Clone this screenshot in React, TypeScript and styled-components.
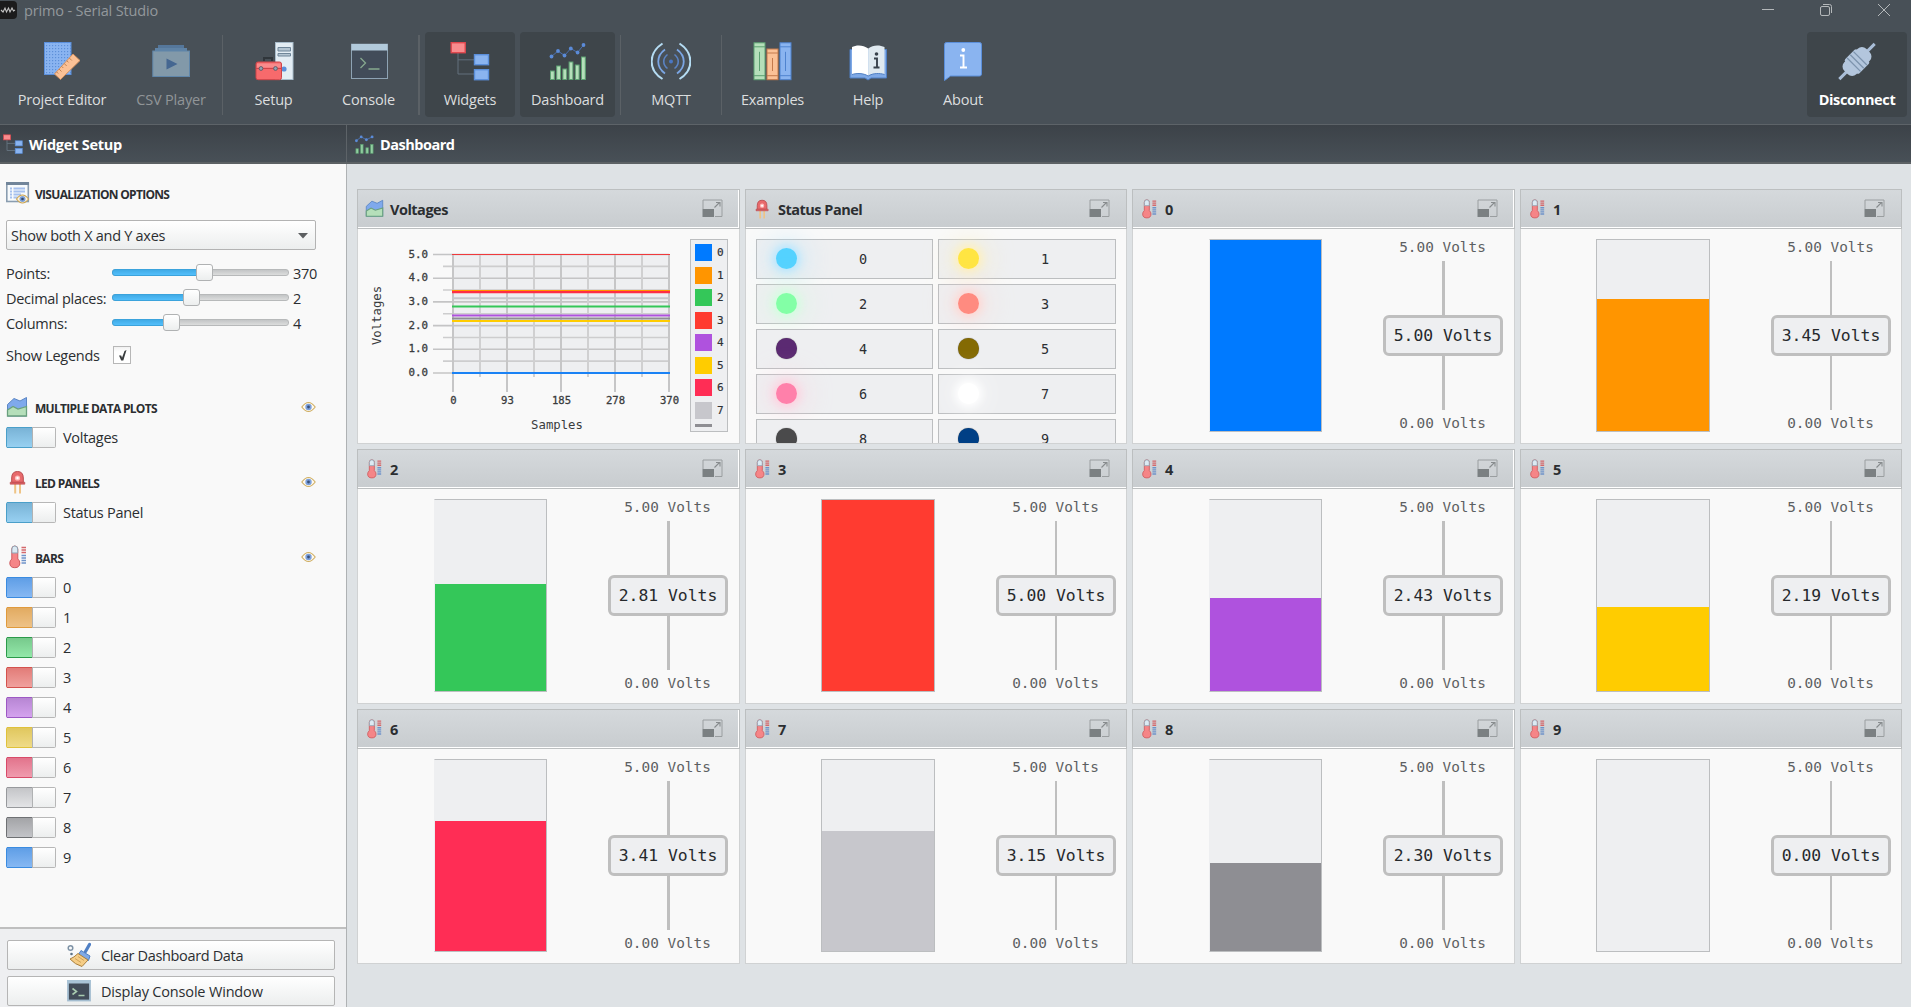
import React from "react";
import styled, { createGlobalStyle } from "styled-components";

const sans = `"Open Sans", "Noto Sans", sans-serif`;
const mono = `"DejaVu Sans Mono", "Liberation Mono", monospace`;

const GlobalStyle = createGlobalStyle`
  * { box-sizing: border-box; }
  html, body { margin: 0; padding: 0; }
  body { font-family: ${sans}; color: #2b2e31; background: #dee2e5; overflow: hidden; }
  svg { display: block; flex: none; }
`;

/* ---------- window frame ---------- */

const Window = styled.div`
  width: 100vw;
  height: 1007px;
  display: flex;
  flex-direction: column;
  overflow: hidden;
`;

const TitleBar = styled.div`
  height: 24px;
  flex: none;
  display: flex;
  align-items: flex-start;
  background: #485057;
`;

const TitleText = styled.div`
  margin-left: 6px;
  font-size: 14.5px;
  line-height: 22px;
  letter-spacing: -0.15px;
  color: #93989c;
  flex: 1;
`;

const WindowControls = styled.div`
  display: flex;
  gap: 46px;
  padding: 4px 21px 0 0;
`;

const Toolbar = styled.div`
  height: 101px;
  flex: none;
  display: flex;
  align-items: flex-start;
  gap: 5px;
  padding: 8px 4px 0 5px;
  background: #485057;
  border-bottom: 1px solid #5d6368;
`;

const ToolButton = styled.div<{ $w: number; $checked?: boolean; $off?: boolean; $bold?: boolean }>`
  width: ${(p) => p.$w}px;
  height: 85px;
  flex: none;
  display: flex;
  flex-direction: column;
  align-items: center;
  padding-top: 9px;
  gap: 9px;
  border-radius: 4px;
  background: ${(p) => (p.$checked ? "#3e454a" : "transparent")};
  color: ${(p) => (p.$off ? "#919597" : p.$bold ? "#ffffff" : "#dcdedf")};
  font-size: 14.5px;
  font-weight: ${(p) => (p.$bold ? 700 : 400)};
  letter-spacing: ${(p) => (p.$bold ? -0.35 : -0.2)}px;
  line-height: 20px;
  white-space: nowrap;
`;

const ToolSeparator = styled.div<{ $w?: number; $pull?: boolean }>`
  width: ${(p) => p.$w ?? 1}px;
  height: 80px;
  flex: none;
  margin: 3px 0 0 ${(p) => (p.$pull ? -1 : 0)}px;
  background: #5b6166;
`;

const Spacer = styled.div`
  flex: 1;
`;

const Main = styled.div`
  flex: 1;
  display: flex;
  min-height: 0;
`;

const SideColumn = styled.div`
  width: 347px;
  flex: none;
  display: flex;
  flex-direction: column;
  border-right: 1px solid #afb2b4;
`;

const ContentColumn = styled.div`
  flex: 1;
  display: flex;
  flex-direction: column;
  min-width: 0;
`;

const PaneHeader = styled.div<{ $pad: number; $edge?: boolean }>`
  height: 39px;
  flex: none;
  display: flex;
  align-items: center;
  gap: 6px;
  padding: 1px 0 0 ${(p) => p.$pad}px;
  margin-right: ${(p) => (p.$edge ? -1 : 0)}px;
  border-bottom: 2px solid #5c6164;
  border-right: ${(p) => (p.$edge ? "1px solid #5d6368" : "none")};
  background: linear-gradient(#3c4248, #485057);
  color: #fff;
  font-size: 14.5px;
  font-weight: 700;
  letter-spacing: ${(p) => (p.$edge ? -0.25 : -0.5)}px;
`;

/* ---------- sidebar ---------- */

const SideBody = styled.div`
  flex: 1;
  background: #f9f9f9;
  padding: 14px 0 0 6px;
  display: flex;
  flex-direction: column;
  font-size: 14.5px;
  letter-spacing: -0.28px;
`;

const SectionHead = styled.div<{ $top?: number }>`
  width: 310px;
  height: 30px;
  flex: none;
  margin-top: ${(p) => p.$top ?? 0}px;
  display: flex;
  align-items: center;
`;

const SectionIcon = styled.div<{ $pad?: number }>`
  width: 29px;
  padding-left: ${(p) => p.$pad ?? 0}px;
`;

const SectionTitle = styled.div`
  flex: 1;
  font-size: 12px;
  font-weight: 700;
  letter-spacing: -0.7px;
  padding-top: 2px;
`;

const Combo = styled.div`
  width: 310px;
  height: 30px;
  margin-top: 12px;
  display: flex;
  align-items: center;
  justify-content: space-between;
  padding: 1px 7px 0 4px;
  border: 1px solid #b3b3b3;
  border-radius: 2px;
  background: linear-gradient(#ffffff, #eceeee);
`;

const Sliders = styled.div`
  margin-top: 10px;
  display: flex;
  flex-direction: column;
`;

const SliderRow = styled.div`
  height: 25px;
  display: flex;
  align-items: center;
`;

const SliderLabel = styled.div`
  width: 106px;
  padding-top: 1px;
  white-space: nowrap;
`;

const Groove = styled.div`
  width: 177px;
  height: 7px;
  display: flex;
  align-items: center;
  border: 1px solid #b7b9ba;
  border-radius: 3px;
  background: linear-gradient(#c3c5c6, #dcdddd);
`;

const GrooveFill = styled.div`
  height: 7px;
  margin-left: -1px;
  flex: none;
  border: 1px solid #3ba3dc;
  border-radius: 3px 0 0 3px;
  background: linear-gradient(#41abe6, #53bffb);
`;

const Handle = styled.div`
  width: 17px;
  height: 17px;
  flex: none;
  margin-left: -1px;
  border: 1px solid #b0b2b3;
  border-radius: 3px;
  background: linear-gradient(#ffffff, #eceeee);
`;

const SliderValue = styled.div`
  margin-left: 4px;
  padding-top: 1px;
`;

const CheckRow = styled.div`
  height: 40px;
  display: flex;
  align-items: center;
`;

const CheckLabel = styled.div`
  width: 107px;
`;

const CheckBox = styled.div`
  width: 18px;
  height: 18px;
  border: 1px solid #b7b7b7;
  background: linear-gradient(#f1f1f1, #ffffff 30%);
`;

const ToggleRow = styled.div`
  height: 30px;
  flex: none;
  display: flex;
  align-items: center;
  gap: 7px;
`;

const Toggle = styled.div<{ $edge: string }>`
  width: 50px;
  height: 21px;
  display: flex;
  border: 1px solid #b7b7b7;
  border-left-color: ${(p) => p.$edge};
  border-radius: 2px;
`;

const ToggleOn = styled.div<{ $a: string; $b: string; $edge: string }>`
  width: 25px;
  margin: -1px 0;
  border-top: 1px solid ${(p) => p.$edge};
  border-bottom: 1px solid ${(p) => p.$edge};
  background: linear-gradient(${(p) => p.$a}, ${(p) => p.$b});
`;

const ToggleKnob = styled.div`
  flex: 1;
  border-left: 1px solid #b0b2b3;
  background: linear-gradient(#ffffff, #eceeee);
`;

const SideFooter = styled.div`
  height: 80px;
  flex: none;
  padding: 11px 0 0 7px;
  display: flex;
  flex-direction: column;
  gap: 6px;
  border-top: 2px solid #bfbfbf;
  background: #eeeff1;
`;

const PushButton = styled.div<{ $track: number }>`
  width: 328px;
  height: 30px;
  flex: none;
  display: flex;
  align-items: center;
  padding-left: 59px;
  gap: 10px;
  border: 1px solid #b5b5b5;
  border-radius: 2px;
  background: linear-gradient(#ffffff, #eceeee);
  font-size: 14.5px;
  letter-spacing: ${(p) => p.$track}px;
`;

/* ---------- dashboard ---------- */

const Board = styled.div`
  flex: 1;
  display: grid;
  grid-template-columns: 383px 382px 383px 382px;
  grid-auto-rows: 255px;
  gap: 5px;
  align-content: start;
  padding: 25px 0 0 10px;
  background: #dee2e5;
`;

const Card = styled.div`
  display: flex;
  flex-direction: column;
  min-width: 0;
`;

const CardHeader = styled.div<{ $edge?: boolean; $pad?: number }>`
  height: 40px;
  flex: none;
  display: flex;
  align-items: center;
  padding: 0 16px 1px ${(p) => p.$pad ?? 7}px;
  border: 1px solid #bcbfc0;
  box-shadow: inset ${(p) => (p.$edge ? -1 : 0)}px -1px 0 #fff;
  background: linear-gradient(#d5d9dc, #c8cccf);
  font-size: 14.5px;
  font-weight: 700;
  letter-spacing: -0.5px;
`;

const CardIcon = styled.div<{ $w: number }>`
  width: ${(p) => p.$w}px;
`;

const CardTitle = styled.div`
  flex: 1;
  padding-top: 2px;
`;

const CardBody = styled.div`
  flex: 1;
  display: flex;
  min-height: 0;
  overflow: hidden;
  border: 1px solid #d0d2d3;
  border-top: none;
  background: #f9f9f9;
`;

const BarFrame = styled.div<{ $edge?: boolean }>`
  width: ${(p) => (p.$edge ? 113 : 114)}px;
  height: 193px;
  margin: 10px 0 0 ${(p) => (p.$edge ? 76 : 75)}px;
  flex: none;
  display: flex;
  align-items: flex-end;
  border: 1px solid #bcbec0;
  border-left-color: ${(p) => (p.$edge ? "#eeeff1" : "#bcbec0")};
  background: #eeeff1;
`;

const BarFill = styled.div`
  width: 100%;
`;

const Gauge = styled.div<{ $edge?: boolean }>`
  flex: 1;
  display: flex;
  flex-direction: column;
  align-items: flex-end;
  padding: 8px ${(p) => (p.$edge ? 11 : 10)}px 0 0;
`;

const GaugeInner = styled.div`
  width: 120px;
  display: flex;
  flex-direction: column;
  align-items: center;
`;

const Limit = styled.div<{ $low?: boolean }>`
  padding-top: ${(p) => (p.$low ? 3 : 0)}px;
  padding-bottom: ${(p) => (p.$low ? 0 : 3)}px;
  margin-left: -1px;
  font: 14.4px/21px ${mono};
  color: #5d6062;
  white-space: nowrap;
`;

const Stem = styled.div<{ $w: number }>`
  width: ${(p) => p.$w}px;
  height: 54px;
  background: #bfbfbf;
`;

const Reading = styled.div`
  width: 120px;
  height: 41px;
  display: flex;
  align-items: center;
  justify-content: center;
  border: 3px solid #bfbfbf;
  border-radius: 6px;
  background: #eeeff1;
  font: 16.4px/20px ${mono};
  color: #26292c;
  white-space: nowrap;
`;

const Legend = styled.div`
  width: 38px;
  height: 193px;
  margin-top: 10px;
  padding: 4px 0 0 4px;
  border: 1px solid #bcbec0;
  background: #eeeff1;
  overflow: hidden;
`;

const LegendRow = styled.div`
  height: 22.5px;
  display: flex;
  align-items: flex-start;
  gap: 5px;
  font: 11px/17px ${mono};
  -webkit-text-stroke: 0.2px #3a3c3e;
`;

const Swatch = styled.div<{ $c: string; $h?: number }>`
  width: 17px;
  height: ${(p) => p.$h ?? 17}px;
  background: ${(p) => p.$c};
`;

const LedGrid = styled.div`
  flex: 1;
  display: grid;
  grid-template-columns: 177px 178px;
  grid-auto-rows: 40px;
  gap: 5px;
  padding: 10px 0 0 10px;
`;

const LedCell = styled.div`
  display: flex;
  align-items: center;
  padding: 0 0 1px 19px;
  border: 1px solid #bcbec0;
  background: #eeeff1;
`;

const Led = styled.div<{ $c: string; $glow?: string }>`
  width: 21px;
  height: 21px;
  border-radius: 50%;
  background: ${(p) => p.$c};
  box-shadow: ${(p) =>
    p.$glow ? `0 0 9px 3px ${p.$glow}, 0 0 26px 10px ${p.$glow}66` : "0 0 1px 0 #555"};
`;

const LedLabel = styled.div`
  margin-left: 62px;
  font: 13.5px/20px ${mono};
`;

/* ---------- icons ---------- */

const LogoIcon = () => (
  <svg width="18" height="20" viewBox="0 0 18 20">
    <rect x="-3" y="1" width="20" height="18" rx="4" fill="#1b1b1c" />
    <path d="M1 10l2 2 2-4 1.500 4L8.500 8l1.500 4 2-4 1.500 3 1.500-1" stroke="#c4c4c4" strokeWidth="1.100" fill="none" />
  </svg>
);

const BlueprintIcon = () => (
  <svg width="40" height="40" viewBox="0 0 40 40">
    <defs>
      <pattern id="dots" width="3" height="3" patternUnits="userSpaceOnUse">
        <rect width="1.200" height="1.200" x="1" y="1" fill="#5d8fd8" />
      </pattern>
    </defs>
    <rect x="2.500" y="1.500" width="26.500" height="32" fill="#8ab4f0" />
    <rect x="2.500" y="1.500" width="26.500" height="32" fill="url(#dots)" stroke="#5b8fdb" />
    <path d="M12.500 33L31 13l7 6.500L18.500 38.500z" fill="#fbc196" stroke="#d8935f" />
    <path d="M14.500 30.800l1.700 1.700M17 28l2.500 2.500M19.600 25.300l1.700 1.700M22.200 22.500l2.500 2.500M24.800 19.700l1.700 1.700M27.300 17l2.500 2.500" stroke="#b97c4c" strokeWidth=".9" />
  </svg>
);

const PlayerIcon = () => (
  <svg width="40" height="40" viewBox="0 0 40 40">
    <path d="M7 4h26v3H7z" fill="#55779b" />
    <path d="M4 7h32v3H4z" fill="#5f83a6" />
    <rect x="1.800" y="10" width="36.700" height="25.500" fill="#8299a9" stroke="#5f86aa" />
    <path d="M15.500 17.500l11 5.500-11 5.500z" fill="#456791" />
  </svg>
);

const SetupIcon = () => (
  <svg width="40" height="40" viewBox="0 0 40 40">
    <rect x="21.500" y="1.500" width="17.500" height="37" fill="#e3edf4" stroke="#a8bccb" />
    <path d="M24 6.500h12.500v3.500H24zM24 12.500h12.500v2.500H24z" fill="#b4c5d2" stroke="#6e8598" />
    <circle cx="30" cy="28" r="2.600" fill="#5b8fdb" />
    <path d="M10 20v-3h8v3" fill="none" stroke="#30363b" strokeWidth="2" />
    <rect x="2" y="21" width="25.500" height="17.700" rx="2" fill="#f76a6c" stroke="#cf4449" />
    <path d="M3 22.500h23.500v4H3z" fill="#f98b8c" />
    <path d="M2 27.500h25.500" stroke="#cf4449" />
    <circle cx="7" cy="27.500" r="1.900" fill="#8fa6b6" stroke="#6d5a66" />
    <circle cx="21.500" cy="27.500" r="1.900" fill="#8fa6b6" stroke="#6d5a66" />
  </svg>
);

const ConsoleIcon = () => (
  <svg width="40" height="40" viewBox="0 0 40 40">
    <rect x="2.500" y="3.200" width="36" height="34.300" fill="#424c59" stroke="#8ea3b4" />
    <path d="M2.500 3h36v6.500h-36z" fill="#b2cadb" />
    <path d="M11.500 17l5 5-5 5M19.500 28h11" stroke="#86a98f" strokeWidth="1.300" fill="none" />
  </svg>
);

const TreeIcon = ({ w = 40 }: { w?: number }) => (
  <svg width={w} height={w} viewBox="0 0 40 40">
    <path d="M8 12v21h16M8 18.800h16" stroke="#62707c" strokeWidth={w < 30 ? 2 : 1} fill="none" />
    <rect x="1.200" y="1.700" width="14" height="10" fill="#f98c8e" stroke="#e0484e" strokeWidth="1.400" />
    <rect x="24.500" y="13.700" width="14" height="10" fill="#8ab4f0" stroke="#5b8fdb" strokeWidth="1.400" />
    <rect x="24.500" y="28.700" width="14" height="10" fill="#8ab4f0" stroke="#5b8fdb" strokeWidth="1.400" />
  </svg>
);

const ChartIcon = ({ w = 40 }: { w?: number }) => {
  const small = w < 30;
  const bars: [number, number][] = small
    ? [[2, 29], [12, 20], [23, 27], [33, 20]]
    : [[2.5, 30], [8.7, 25], [14.9, 28], [21.1, 21], [27.3, 24], [33.5, 16]];
  const pts = small ? "3,12 13,4 24,10 36,4" : "3.5,15.5 10,10 16.5,14.5 22.8,7.5 29.6,11.5 35.5,4";
  return (
    <svg width={w} height={w} viewBox="0 0 40 40">
      {bars.map(([x, y]) => (
        <rect key={x} x={x} y={y} width={small ? 5 : 3.8} height={38.5 - y} fill={small ? "#94cfa2" : "#b5dfba"} stroke="#5da172" strokeWidth={small ? 1.5 : 1} />
      ))}
      <polyline points={pts} fill="none" stroke="#4a6fae" strokeWidth={small ? 2 : 1} />
      {pts.split(" ").map((p) => (
        <circle key={p} cx={p.split(",")[0]} cy={p.split(",")[1]} r={small ? 3 : 1.9} fill="#5b8bd8" />
      ))}
    </svg>
  );
};

const SignalIcon = () => (
  <svg width="40" height="40" viewBox="0 0 40 40" fill="none">
    <path d="M11.500 2.500C-3 12-3 29 11.500 38M28.500 2.500C43 12 43 29 28.500 38" stroke="#b5dcf3" strokeWidth="2" />
    <path d="M14 8.500c-9 6.500-9 17.500 0 24M26 8.500c9 6.500 9 17.500 0 24" stroke="#7ba6e4" strokeWidth="1.800" />
    <path d="M16.500 13.500c-5 4-5 10 0 14M23.500 13.500c5 4 5 10 0 14" stroke="#5b83c2" strokeWidth="1.600" />
    <circle cx="20" cy="20.500" r="2" fill="#4a77c4" />
  </svg>
);

const BooksIcon = () => (
  <svg width="40" height="40" viewBox="0 0 40 40">
    {([[1, 1.8, "#b5dfba", "#5da172"], [14, 8, "#fbc196", "#c47a4c"], [27, 1.8, "#8ab4f0", "#4f83cf"]] as [number, number, string, string][]).map(
      ([x, y, f, s]) => (
        <g key={x} stroke={s} fill={f}>
          <rect x={x} y={y} width="11" height={38.7 - y} />
          <path d={`M${x} ${y + 4}h11M${x} 34.700h11M${x + 5.5} ${y + 9}V30`} />
        </g>
      )
    )}
  </svg>
);

const HelpIcon = () => (
  <svg width="40" height="40" viewBox="0 0 40 40">
    <path d="M2 8.500h36.500V37H23l-3 2-3-2H2z" fill="#7fa9e6" stroke="#4f7fc4" />
    <path d="M20.200 7.500C15 3.500 8 4 4 6v27.500c5-1.500 11-1.500 16.200 1.500z" fill="#fff" />
    <path d="M20.200 7.500C25 3.500 32 4 36.500 6v27.500c-5-1.500-11-1.500-16.300 1.500z" fill="#dfe9f0" />
    <path d="M4 33.500c5-1.500 11-1.500 16.200 1.500 5-3 11-3 16.300-1.500" fill="none" stroke="#4f7fc4" />
    <path d="M26 17.500h3v8.500M25.500 26.500h6" stroke="#39424c" strokeWidth="1.900" fill="none" />
    <circle cx="28.500" cy="13" r="1.800" fill="#39424c" />
  </svg>
);

const AboutIcon = () => (
  <svg width="40" height="40" viewBox="0 0 40 40">
    <path d="M3.500 1.500h33q2 0 2 2V33q0 2-2 2H7.500L1.500 39.500V3.500q0-2 2-2z" fill="#8ab4f0" stroke="#5b8fdb" />
    <path d="M17 14.500h3.500V26M17 26.500h7" stroke="#fff" strokeWidth="1.900" fill="none" />
    <circle cx="20.300" cy="9" r="1.900" fill="#fff" />
  </svg>
);

const PlugIcon = () => (
  <svg width="40" height="40" viewBox="0 0 40 40">
    <g transform="translate(20 20.500) rotate(-45)">
      <path d="M-25-1.500h50v3h-50z" fill="#a9bed8" />
      <rect x="-15.500" y="-8.500" width="31" height="17" rx="6" fill="#b3c6dd" />
      <rect x="-8.500" y="-10" width="17" height="20" rx="2" fill="#b3c6dd" />
      <path d="M-4.500-9.500v19M0-9.500v19M4.500-9.500v19" stroke="#7d94ae" strokeWidth="1.300" />
    </g>
  </svg>
);

const OptionsIcon = () => (
  <svg width="24" height="24" viewBox="0 0 24 24">
    <rect x=".8" y="2" width="21.500" height="18.500" fill="#f7fafc" stroke="#8a9db0" strokeWidth="1.600" />
    <path d="M0 1h23v3H0z" fill="#71859a" />
    <path d="M4 7.500h2M7.500 7.500H19M4 10.500h2M7.500 10.500H19M4 13.500h2M7.500 13.500H15M4 16.500h2M7.500 16.500H12" stroke="#a5c0ee" strokeWidth="1.800" />
    <path d="M10.500 18q6-8 12 0-6 8-12 0z" fill="#fff6e0" stroke="#caa24e" strokeWidth="1.200" />
    <circle cx="16.500" cy="18" r="3" fill="#7c9fd6" />
    <circle cx="16.500" cy="18" r="1.300" fill="#33476d" />
  </svg>
);

const AreaIcon = ({ w = 22 }: { w?: number }) => (
  <svg width={w} height={w} viewBox="0 0 22 22">
    <path d="M1.500 8.500L8 2.500l6 2.500 6.500-3.500V20h-19z" fill="#7fa9ec" stroke="#5b86c4" />
    <path d="M1.500 14L7 10.500l5 2.500 8.500-2.500v9.500h-19z" fill="#b5dfba" stroke="#6aa07e" strokeWidth="1.300" />
  </svg>
);

const LedIcon = ({ w = 24 }: { w?: number }) => (
  <svg width={w * 0.7} height={w} viewBox="0 0 16.800 24">
    <path d="M6.200 14v9.500M11 14v9.500" stroke="#efc486" strokeWidth="2" />
    <path d="M2.700 12.500V8q0-6.500 5.800-6.500t5.800 6.500v4.500z" fill="#e86a6c" stroke="#b94a4e" />
    <path d="M1.200 12.200h14.600v2H1.200z" fill="#d95f62" stroke="#b94a4e" strokeWidth=".6" />
    <circle cx="8.500" cy="8" r="2.600" fill="#fbb" />
    <circle cx="8.500" cy="8" r="1.200" fill="#fff" />
  </svg>
);

const ThermoIcon = ({ w = 24 }: { w?: number }) => (
  <svg width={w * 0.75} height={w} viewBox="0 0 18 24">
    <path d="M2.800 14V4q0-3 3-3t3 3v10q2 1.500 2 4 0 4.700-5 4.700T.8 18q0-2.500 2-4z" fill="#f58587" stroke="#cf5a5e" />
    <path d="M2.900 8V4q0-3 2.900-3t2.900 3v4z" fill="#dceaf3" stroke="#8fa3b3" />
    <path d="M12.500 2.500h4.500M12.500 5h4.500M12.500 7.500h4.500" stroke="#d4686c" strokeWidth="1.600" />
    <path d="M12.500 10.500h4.500M12.500 13h4.500M12.500 15.500h4.500M12.500 18h4.500" stroke="#6f93c9" strokeWidth="1.600" />
  </svg>
);

const EyeIcon = () => (
  <svg width="15" height="12" viewBox="0 0 15 12">
    <path d="M.8 6Q7.500-3 14.200 6 7.500 15 .8 6z" fill="#fffaf0" stroke="#cfae62" strokeWidth="1.100" />
    <circle cx="7.500" cy="6" r="3.200" fill="#7ba0dc" />
    <circle cx="7.500" cy="6" r="1.400" fill="#3a5078" />
  </svg>
);

const ExpandIcon = () => (
  <svg width="21" height="19" viewBox="0 0 21 19">
    <path d="M1 10V1h19v16.500h-7" fill="none" stroke="#9a9ea0" />
    <path d="M.5 10h11.500v8H.5z" fill="#7b8082" />
    <path d="M12.500 8.500l5-5M14 3.500h4V7.500" fill="none" stroke="#888c8e" strokeWidth="1.100" />
  </svg>
);

const BroomIcon = () => (
  <svg width="24" height="26" viewBox="0 0 24 26">
    <circle cx="3.500" cy="6" r="2.300" fill="none" stroke="#7f93a6" strokeWidth="1.500" />
    <circle cx="4.500" cy="12" r="1.300" fill="#5e7488" />
    <path d="M22.500 2.500L18.500 9.500" stroke="#4f7fc4" strokeWidth="3.200" strokeLinecap="round" />
    <path d="M14 8.500l9 5.500-1.500 4.500-10-6z" fill="#7fa9e6" stroke="#4f7fc4" />
    <path d="M11 11.500l10 6.500-6 6.500q-7-2-12-7.500 4-1.500 8-5.500z" fill="#f5cd86" stroke="#a9803f" />
    <path d="M8 16.500l6 4M11 14.500l6 4" stroke="#d3a45a" />
  </svg>
);

const SmallConsoleIcon = () => (
  <svg width="24" height="22" viewBox="0 0 24 22">
    <rect x="1" y="1" width="22" height="19.500" fill="#424c59" stroke="#a4bdd0" strokeWidth="1.800" />
    <path d="M0 0h24v3.500H0z" fill="#a9c3d6" />
    <path d="M5.500 8.500l4 3-4 3M11.500 15.500h6" stroke="#a8cbb0" strokeWidth="1.600" fill="none" />
  </svg>
);

/* ---------- data ---------- */

const channels = [
  { color: "#007aff", value: 5.0, toggle: ["#5f9ee6", "#86b8f3", "#3a8be0"] },
  { color: "#ff9500", value: 3.45, toggle: ["#e2ab61", "#eec287", "#e09a3c"] },
  { color: "#34c759", value: 2.81, toggle: ["#77c98c", "#93e8a9", "#2b9a4a"] },
  { color: "#ff3b30", value: 5.0, toggle: ["#e27c78", "#f0a19e", "#d4524d"] },
  { color: "#af52de", value: 2.43, toggle: ["#b786d3", "#d4a2ee", "#9d58c4"] },
  { color: "#ffcc00", value: 2.19, toggle: ["#e0c75e", "#efdb88", "#dfc13a"] },
  { color: "#ff2d55", value: 3.41, toggle: ["#e2748c", "#f09bae", "#d84a69"] },
  { color: "#c7c7cc", value: 3.15, toggle: ["#c4c5c8", "#e3e4e6", "#97999c"] },
  { color: "#8e8e93", value: 2.3, toggle: ["#a3a4a7", "#c3c4c8", "#6e7073"] },
  { color: "#007aff", value: 0.0, toggle: ["#5f9ee6", "#86b8f3", "#3a8be0"] },
];

const leds: { c: string; glow?: string }[] = [
  { c: "#54d2ff", glow: "#b4e6ff" },
  { c: "#ffe542", glow: "#fff0b8" },
  { c: "#83ffa6", glow: "#d0ffdd" },
  { c: "#ff8b80", glow: "#ffd6d2" },
  { c: "#5b2a72" },
  { c: "#846a03" },
  { c: "#ff80aa", glow: "#ffcfde" },
  { c: "#ffffff", glow: "#ffffff" },
  { c: "#4a4a4b" },
  { c: "#003f85" },
];

/* ---------- pieces ---------- */

const ToggleItem = ({ colors, label }: { colors: string[]; label: string }) => (
  <ToggleRow>
    <Toggle $edge={colors[2]}>
      <ToggleOn $a={colors[0]} $b={colors[1]} $edge={colors[2]} />
      <ToggleKnob />
    </Toggle>
    <span>{label}</span>
  </ToggleRow>
);

const SliderItem = ({ label, fill, value }: { label: string; fill: number; value: string }) => (
  <SliderRow>
    <SliderLabel>{label}</SliderLabel>
    <Groove>
      <GrooveFill style={{ width: fill }} />
      <Handle />
    </Groove>
    <SliderValue>{value}</SliderValue>
  </SliderRow>
);

const Plot = () => {
  const L = 95, R = 311, T = 25.5, B = 144;
  const y = (v: number) => B - ((B - T) * v) / 5;
  const series: [number, string, number][] = [
    [3.15, "#c7c7cc", 2], [5, "#f03a3c", 1.2], [3.47, "#ff9500", 1.5], [3.41, "#ff2d45", 2.2],
    [2.81, "#34c759", 2], [2.43, "#af52de", 2], [2.3, "#8e8e93", 2], [2.19, "#ffcc00", 2], [0, "#1a82f5", 2],
  ];
  return (
    <svg width="332" height="213" viewBox="0 0 332 213" fontFamily={mono} fill="#3a3c3e">
      <rect x={L} y={T} width={R - L} height={B - T} fill="#eeeff1" />
      {Array.from({ length: 11 }, (_, i) => (
        <path key={i} d={`M${i % 2 ? 85 : 75} ${y(i / 2)}H${R}`} stroke={i % 2 ? "#cdcdce" : "#c4c4c5"} strokeWidth="1.600" />
      ))}
      {Array.from({ length: 9 }, (_, i) => (
        <path key={i} d={`M${L + i * 27} ${T}V${i % 2 ? 148 : 163}`} stroke={i % 2 ? "#d0d0d1" : "#c6c6c7"} strokeWidth="2" />
      ))}
      {series.map(([v, c, w]) => (
        <path key={v} d={`M94 ${y(v)}H312`} stroke={c} strokeWidth={w} />
      ))}
      {[0, 1, 2, 3, 4, 5].map((v) => (
        <text key={v} x="70" y={y(v) + 3} textAnchor="end" fontSize="10.800" stroke="#3a3c3e" strokeWidth=".3">{v.toFixed(1)}</text>
      ))}
      {["0", "93", "185", "278", "370"].map((t, i) => (
        <text key={t} x={L + i * 54 + 0.5} y="174.500" textAnchor="middle" fontSize="10.600" stroke="#3a3c3e" strokeWidth=".3">{t}</text>
      ))}
      <text x="199" y="199.500" textAnchor="middle" fontSize="12.300">Samples</text>
      <text transform="translate(23 86.500) rotate(-90)" textAnchor="middle" fontSize="12.300">Voltages</text>
    </svg>
  );
};

const BarCard = ({ index, edge }: { index: number; edge: boolean }) => {
  const ch = channels[index];
  return (
    <Card>
      <CardHeader $edge={edge} $pad={9}>
        <CardIcon $w={23}><ThermoIcon w={20} /></CardIcon>
        <CardTitle>{index}</CardTitle>
        <ExpandIcon />
      </CardHeader>
      <CardBody>
        <BarFrame $edge={edge}>
          <BarFill style={{ height: `${Math.round((ch.value / 5) * 191)}px`, background: ch.color }} />
        </BarFrame>
        <Gauge $edge={edge}>
          <GaugeInner>
            <Limit>5.00 Volts</Limit>
            <Stem $w={edge ? 3 : 2} />
            <Reading>{ch.value.toFixed(2)} Volts</Reading>
            <Stem $w={edge ? 3 : 2} />
            <Limit $low>0.00 Volts</Limit>
          </GaugeInner>
        </Gauge>
      </CardBody>
    </Card>
  );
};

const panelToggle = ["#79b3d6", "#97d0f1", "#4a9fc9"];

export default function App() {
  return (
    <Window>
      <GlobalStyle />
      <TitleBar>
        <LogoIcon />
        <TitleText>primo - Serial Studio</TitleText>
        <WindowControls>
          <svg width="12" height="12"><path d="M0 5.500h12" stroke="#b4b8ba" /></svg>
          <svg width="12" height="12" fill="none" stroke="#b4b8ba">
            <rect x=".5" y="2.500" width="9" height="9" rx="1.500" />
            <path d="M3 .5h6.500q2 0 2 2V9" />
          </svg>
          <svg width="12" height="12"><path d="M0 0l12 12M12 0L0 12" stroke="#b4b8ba" /></svg>
        </WindowControls>
      </TitleBar>

      <Toolbar>
        <ToolButton $w={114}><BlueprintIcon />Project Editor</ToolButton>
        <ToolButton $w={94} $off><PlayerIcon />CSV Player</ToolButton>
        <ToolSeparator $pull />
        <ToolButton $w={91}><SetupIcon />Setup</ToolButton>
        <ToolButton $w={89}><ConsoleIcon />Console</ToolButton>
        <ToolSeparator $w={2} />
        <ToolButton $w={90} $checked><TreeIcon />Widgets</ToolButton>
        <ToolButton $w={95} $checked><ChartIcon />Dashboard</ToolButton>
        <ToolSeparator />
        <ToolButton $w={90}><SignalIcon />MQTT</ToolButton>
        <ToolSeparator />
        <ToolButton $w={91}><BooksIcon />Examples</ToolButton>
        <ToolButton $w={90}><HelpIcon />Help</ToolButton>
        <ToolButton $w={90}><AboutIcon />About</ToolButton>
        <Spacer />
        <ToolButton $w={100} $checked $bold><PlugIcon />Disconnect</ToolButton>
      </Toolbar>

      <Main>
        <SideColumn>
          <PaneHeader $pad={3} $edge><TreeIcon w={20} />Widget Setup</PaneHeader>
          <SideBody>
            <SectionHead>
              <SectionIcon><OptionsIcon /></SectionIcon>
              <SectionTitle>VISUALIZATION OPTIONS</SectionTitle>
            </SectionHead>
            <Combo>
              Show both X and Y axes
              <svg width="10" height="6"><path d="M0 0h10L5 5.500z" fill="#5c5f61" /></svg>
            </Combo>
            <Sliders>
              <SliderItem label="Points:" fill={85} value="370" />
              <SliderItem label="Decimal places:" fill={72} value="2" />
              <SliderItem label="Columns:" fill={52} value="4" />
            </Sliders>
            <CheckRow>
              <CheckLabel>Show Legends</CheckLabel>
              <CheckBox>
                <svg width="16" height="16"><path d="M5 8.500h2.200l.8 2.200L10.500 4l2-1L9.300 13.500H7.200z" fill="#3a3d3f" /></svg>
              </CheckBox>
            </CheckRow>

            <SectionHead $top={17}>
              <SectionIcon><AreaIcon /></SectionIcon>
              <SectionTitle>MULTIPLE DATA PLOTS</SectionTitle>
              <EyeIcon />
            </SectionHead>
            <ToggleItem colors={panelToggle} label="Voltages" />

            <SectionHead $top={15}>
              <SectionIcon $pad={3}><LedIcon /></SectionIcon>
              <SectionTitle>LED PANELS</SectionTitle>
              <EyeIcon />
            </SectionHead>
            <ToggleItem colors={panelToggle} label="Status Panel" />

            <SectionHead $top={15}>
              <SectionIcon $pad={3}><ThermoIcon /></SectionIcon>
              <SectionTitle>BARS</SectionTitle>
              <EyeIcon />
            </SectionHead>
            {channels.map((c, i) => (
              <ToggleItem key={i} colors={c.toggle} label={String(i)} />
            ))}
          </SideBody>
          <SideFooter>
            <PushButton $track={-0.35}><BroomIcon />Clear Dashboard Data</PushButton>
            <PushButton $track={-0.17}><SmallConsoleIcon />Display Console Window</PushButton>
          </SideFooter>
        </SideColumn>

        <ContentColumn>
          <PaneHeader $pad={8}><ChartIcon w={19} />Dashboard</PaneHeader>
          <Board>
            <Card>
              <CardHeader $edge>
                <CardIcon $w={25}><AreaIcon w={19} /></CardIcon>
                <CardTitle>Voltages</CardTitle>
                <ExpandIcon />
              </CardHeader>
              <CardBody>
                <Plot />
                <Legend>
                  {channels.slice(0, 8).map((c, i) => (
                    <LegendRow key={i}><Swatch $c={c.color} />{i}</LegendRow>
                  ))}
                  <LegendRow><Swatch $c="#8e8e93" $h={3} /></LegendRow>
                </Legend>
              </CardBody>
            </Card>
            <Card>
              <CardHeader $pad={9}>
                <CardIcon $w={23}><LedIcon w={20} /></CardIcon>
                <CardTitle>Status Panel</CardTitle>
                <ExpandIcon />
              </CardHeader>
              <CardBody>
                <LedGrid>
                  {leds.map((l, i) => (
                    <LedCell key={i}>
                      <Led $c={l.c} $glow={l.glow} />
                      <LedLabel>{i}</LedLabel>
                    </LedCell>
                  ))}
                </LedGrid>
              </CardBody>
            </Card>
            {channels.map((_, i) => (
              <BarCard key={i} index={i} edge={i % 2 === 0} />
            ))}
          </Board>
        </ContentColumn>
      </Main>
    </Window>
  );
}
